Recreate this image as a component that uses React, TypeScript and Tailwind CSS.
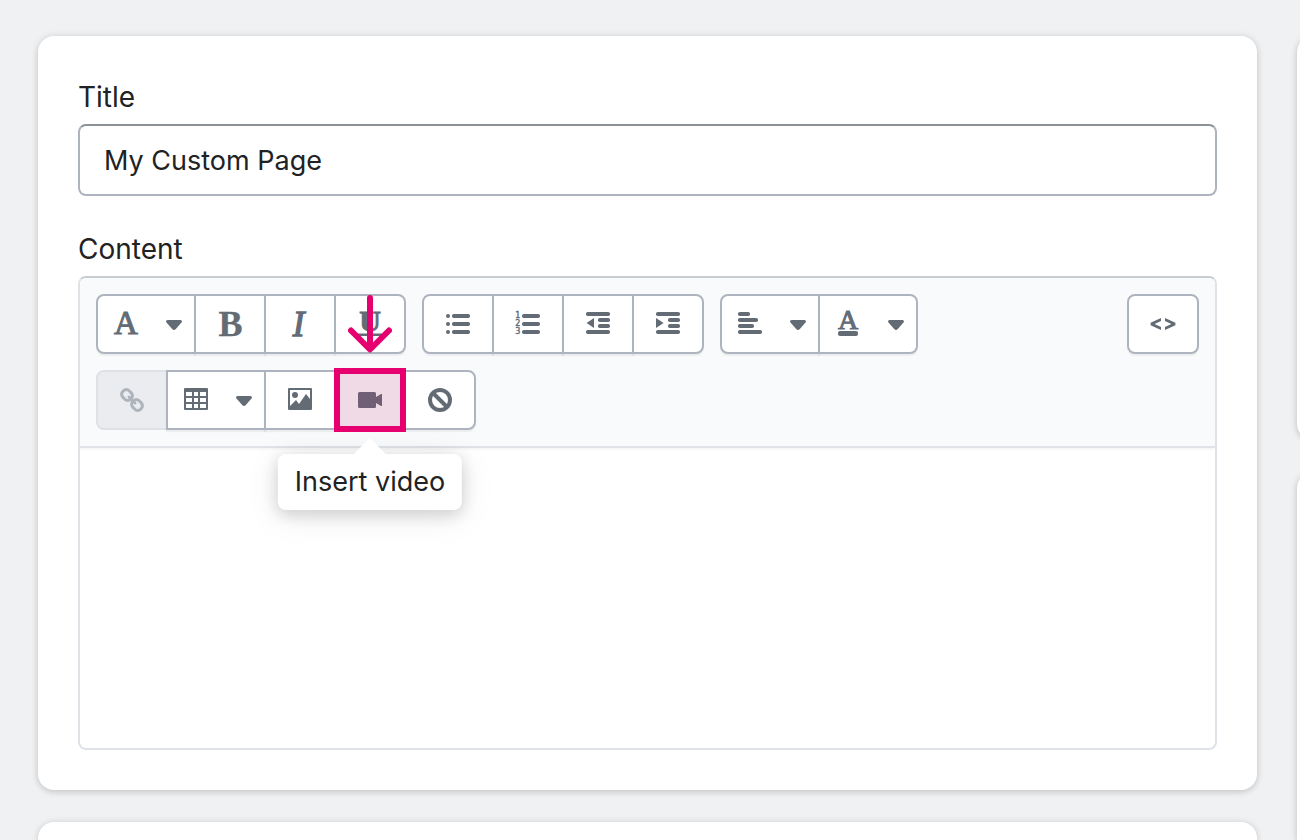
import type { ReactNode } from "react";

const cell =
  "relative -ml-0.5 flex h-[60px] w-[72px] items-center justify-center border-2 border-[#aeb4bf] bg-white text-[#636b75] shadow-[0_2px_1px_rgba(0,0,0,0.05)] first:ml-0 first:rounded-l-lg last:rounded-r-lg";
const wideCell =
  "relative -ml-0.5 flex h-[60px] w-[100px] items-center justify-between border-2 border-[#aeb4bf] bg-white pr-3 pl-4 text-[#636b75] shadow-[0_2px_1px_rgba(0,0,0,0.05)] first:ml-0 first:rounded-l-lg last:rounded-r-lg";

function Icon({ children }: { children: ReactNode }) {
  return (
    <svg viewBox="0 0 24 24" className="size-6 shrink-0 overflow-visible" fill="currentColor" aria-hidden="true">
      {children}
    </svg>
  );
}

function Caret() {
  return (
    <svg viewBox="0 0 16 10" className="mt-0.5 h-2.5 w-4 shrink-0" fill="currentColor" aria-hidden="true">
      <path d="M1.6 0h12.8c1.4 0 2.1 1.6 1.1 2.6L9.6 9.2c-.9 1-2.3 1-3.2 0L.5 2.6C-.5 1.6.2 0 1.6 0z" />
    </svg>
  );
}

function Bars({ rows }: { rows: [number, number, number][] }) {
  return (
    <>
      {rows.map(([x, y, w]) => (
        <rect key={y} x={x} y={y} width={w} height="4" rx="1.8" />
      ))}
    </>
  );
}

function Button({ label, wide, children }: { label: string; wide?: boolean; children: ReactNode }) {
  return (
    <button type="button" aria-label={label} className={wide ? wideCell : cell}>
      {children}
      {wide && <Caret />}
    </button>
  );
}

function DownArrow() {
  return (
    <svg
      viewBox="0 0 44 58"
      className="pointer-events-none absolute top-px left-3.5 z-10 h-[58px] w-11"
      fill="none"
      stroke="#e6006f"
      strokeWidth="6"
      strokeLinecap="round"
      strokeLinejoin="round"
      aria-hidden="true"
    >
      <path d="M22 3v51M3 35.500 22 54.500 41 35.500" />
    </svg>
  );
}

function Toolbar() {
  return (
    <div
      role="toolbar"
      aria-label="Formatting"
      className="flex flex-col gap-4 rounded-t-md border-b-2 border-[#dfe3e8] bg-[#f9fafc] p-4 shadow-[0_2px_1px_rgba(0,0,0,0.03)]"
    >
      <div className="flex gap-4">
        <div className="flex">
          <Button label="Formatting" wide>
            <Icon>
              <text x="12" y="22" textAnchor="middle" fontSize="33" stroke="currentColor" strokeWidth="1.1" className="font-['Liberation_Serif',serif]">A</text>
            </Icon>
          </Button>
          <Button label="Bold">
            <Icon>
              <text x="12.500" y="24" textAnchor="middle" fontSize="36" stroke="currentColor" strokeWidth="0.3" className="font-['Liberation_Serif',serif] font-bold">B</text>
            </Icon>
          </Button>
          <Button label="Italic">
            <Icon>
              <text x="10.500" y="23.500" textAnchor="middle" fontSize="35" stroke="currentColor" strokeWidth="1.3" className="font-['Liberation_Serif',serif] italic">I</text>
            </Icon>
          </Button>
          <div className="relative -ml-0.5 flex">
            <button
              type="button"
              aria-label="Underline"
              className="flex h-[60px] w-[72px] items-center justify-center rounded-r-lg border-2 border-[#aeb4bf] bg-white text-[#636b75] shadow-[0_2px_1px_rgba(0,0,0,0.05)]"
            >
              <Icon>
                <text x="12" y="19" textAnchor="middle" fontSize="30" stroke="currentColor" strokeWidth="0.9" className="font-['Liberation_Serif',serif] font-bold">U</text>
                <rect x="0" y="21.500" width="24" height="2.500" />
              </Icon>
            </button>
            <DownArrow />
          </div>
        </div>

        <div className="flex">
          <Button label="Bulleted list">
            <Icon>
              <circle cx="2" cy="4" r="2" />
              <circle cx="2" cy="12" r="2" />
              <circle cx="2" cy="20" r="2" />
              <Bars rows={[[6, 2, 18], [6, 10, 18], [6, 18, 18]]} />
            </Icon>
          </Button>
          <Button label="Numbered list">
            <Icon>
              <g fontSize="8" textAnchor="middle" stroke="currentColor" strokeWidth="0.4" className="font-['DejaVu_Sans',sans-serif]">
                <text x="1.800" y="6">1</text>
                <text x="1.800" y="14">2</text>
                <text x="1.800" y="22">3</text>
              </g>
              <Bars rows={[[6, 2, 18], [6, 10, 18], [6, 18, 18]]} />
            </Icon>
          </Button>
          <Button label="Outdent">
            <Icon>
              <Bars rows={[[0, 0, 24], [12, 6, 12], [12, 12, 12], [0, 18, 24]]} />
              <path d="M8 6v10L.6 11z" />
            </Icon>
          </Button>
          <Button label="Indent">
            <Icon>
              <Bars rows={[[0, 0, 24], [12, 6, 12], [12, 12, 12], [0, 18, 24]]} />
              <path d="M0 6v10l7.600-5z" />
            </Icon>
          </Button>
        </div>

        <div className="flex">
          <Button label="Alignment" wide>
            <Icon>
              <Bars rows={[[0, 0, 12], [0, 6, 20], [0, 12, 16], [0, 18, 24]]} />
            </Icon>
          </Button>
          <Button label="Color" wide>
            <Icon>
              <text x="12" y="16.500" textAnchor="middle" fontSize="28" stroke="currentColor" strokeWidth="1" className="font-['Liberation_Serif',serif]">A</text>
              <rect x="2" y="19" width="20" height="5" rx="2" />
            </Icon>
          </Button>
        </div>

        <div className="ml-auto flex">
          <Button label="Show HTML">
            <Icon>
              <path d="M10 6v3L3.600 12 10 15v3L-.4 13.200v-2.400zM14 6v3l6.400 3-6.400 3v3l10.400-4.800v-2.400z" />
            </Icon>
          </Button>
        </div>
      </div>

      <div className="flex">
        <button
          type="button"
          disabled
          aria-label="Insert link"
          className="flex h-[60px] w-[72px] items-center justify-center rounded-l-lg border-2 border-[#dfe1e6] bg-[#ebecf0] text-[#aeb4bb]"
        >
          <Icon>
            <g fill="none" stroke="currentColor" strokeWidth="3">
              <rect x="-5.500" y="-4.500" width="11" height="9" rx="4" transform="translate(7 7) rotate(45)" />
              <rect x="-5.500" y="-4.500" width="11" height="9" rx="4" transform="translate(17 17) rotate(45)" />
              <path d="m9 9 6 6" strokeLinecap="round" />
            </g>
          </Icon>
        </button>
        <Button label="Insert table" wide>
          <Icon>
            <path
              fillRule="evenodd"
              d="M1 0h22a1 1 0 0 1 1 1v20a1 1 0 0 1-1 1H1a1 1 0 0 1-1-1V1a1 1 0 0 1 1-1zM2 4v4h6V4zm8 0v4h4V4zm6 0v4h6V4zM2 10v4h6v-4zm8 0v4h4v-4zm6 0v4h6v-4zM2 16v4h6v-4zm8 0v4h4v-4zm6 0v4h6v-4z"
            />
          </Icon>
        </Button>
        <Button label="Insert image">
          <Icon>
            <path
              fillRule="evenodd"
              d="M1 0h22a1 1 0 0 1 1 1v20a1 1 0 0 1-1 1H1a1 1 0 0 1-1-1V1a1 1 0 0 1 1-1zM2 2v16l6-6 3 4 7-10 4 5V2z"
            />
            <circle cx="7" cy="7" r="3" />
          </Icon>
        </Button>
        <div className="relative z-10 -mx-0.5 -my-0.5 flex">
          <button
            type="button"
            aria-label="Insert video"
            aria-describedby="video-tip"
            className="flex h-16 w-[72px] items-center justify-center border-[6px] border-[#e6006f] bg-[#efdae6] text-[#705f75]"
          >
            <Icon>
              <path d="M1.500 4h15A1.500 1.500 0 0 1 18 5.500v3.500l5-3h1v12h-1l-5-3v3.500a1.500 1.500 0 0 1-1.500 1.500h-15A1.500 1.500 0 0 1 0 18.500v-13A1.500 1.500 0 0 1 1.500 4z" />
            </Icon>
          </button>
          <div
            id="video-tip"
            role="tooltip"
            className="absolute top-[86px] left-1/2 -translate-x-1/2 rounded-lg bg-white px-[17px] py-2 text-[27px] leading-10 whitespace-nowrap text-[#202223] shadow-[0_6px_36px_rgba(23,24,24,0.08),0_4px_16px_rgba(23,24,24,0.18)]"
          >
            <svg viewBox="0 0 32 17" className="absolute -top-4 left-1/2 h-[17px] w-8 -translate-x-1/2" fill="#fff" aria-hidden="true">
              <path d="M0 16 14.600 1.400q1.400-1.400 2.800 0L32 16v1H0z" />
            </svg>
            Insert video
          </div>
        </div>
        <button
          type="button"
          aria-label="Clear formatting"
          className="flex h-[60px] w-[72px] items-center justify-center rounded-r-lg border-2 border-[#aeb4bf] bg-white text-[#636b75] shadow-[0_2px_1px_rgba(0,0,0,0.05)]"
        >
          <Icon>
            <g fill="none" stroke="currentColor" strokeWidth="4">
              <circle cx="12" cy="12" r="10" />
              <path d="m5 5 14 14" />
            </g>
          </Icon>
        </button>
      </div>
    </div>
  );
}

const card = "bg-white shadow-[0_0_10px_rgba(23,24,24,0.07),0_2px_6px_rgba(0,0,0,0.14)]";

export default function App() {
  return (
    <div className="flex h-screen gap-10 overflow-hidden bg-[#f0f1f3] pt-9 pl-[38px] font-['Inter','Liberation_Sans',sans-serif] text-[28px] leading-[42px] text-[#202223]">
      <main className="flex min-w-0 flex-1 flex-col gap-8">
        <section className={`${card} shrink-0 rounded-2xl p-10`}>
          <label htmlFor="title" className="block">
            Title
          </label>
          <input
            id="title"
            type="text"
            defaultValue="My Custom Page"
            className="mt-1.5 block h-[72px] w-full rounded-lg border-2 border-[#aeb4bf] border-t-[#8c9196] bg-white px-6 text-[27px] outline-none"
          />
          <label htmlFor="content" className="mt-8 block">
            Content
          </label>
          <div className="mt-1.5 rounded-lg border-2 border-[#dfe3e8] border-t-[#c9cccf]">
            <Toolbar />
            <textarea id="content" className="block h-[300px] w-full resize-none rounded-b-md bg-transparent p-4 outline-none" />
          </div>
        </section>
        <section className={`${card} flex-1 rounded-t-2xl`} />
      </main>
      <aside className="-mr-[317px] flex w-80 shrink-0 flex-col gap-8">
        <section className={`${card} h-[404px] shrink-0 rounded-2xl`} />
        <section className={`${card} flex-1 rounded-t-2xl`} />
      </aside>
    </div>
  );
}
